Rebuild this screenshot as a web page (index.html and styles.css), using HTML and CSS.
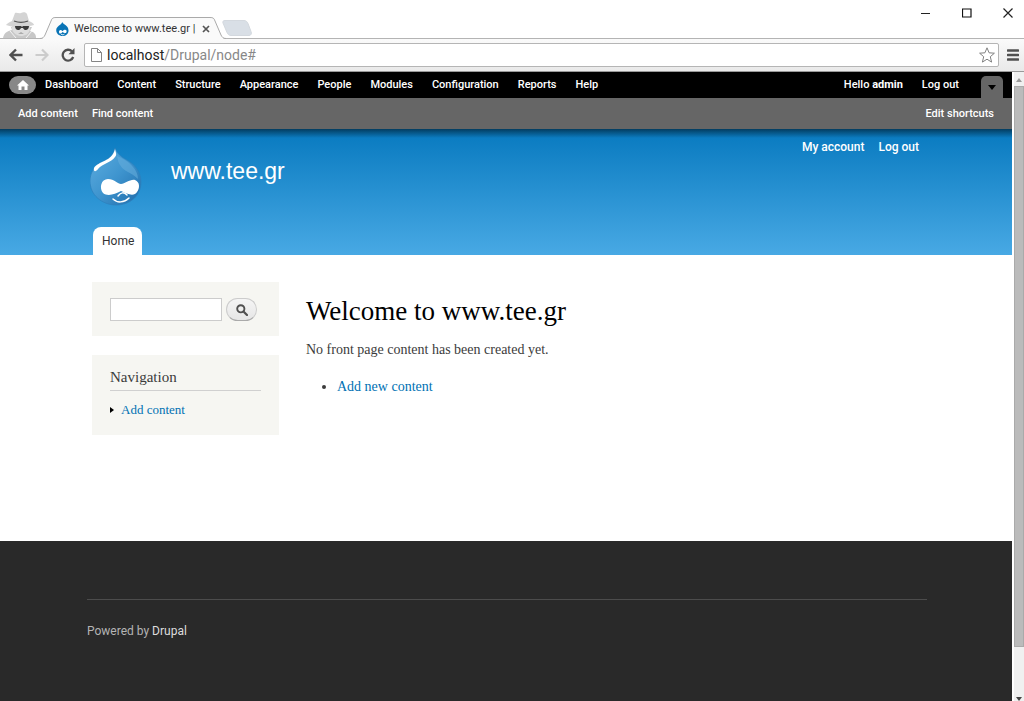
FILE: index.html
```html
<!DOCTYPE html>
<html lang="en">
<head>
<meta charset="utf-8">
<title>Welcome to www.tee.gr</title>
<link rel="stylesheet" href="styles.css">
</head>
<body>
<div class="window">
  <div class="tabstrip">
    <svg class="incognito" width="34" height="26" viewBox="0 0 34 26">
      <path d="M0 26c1-5 4-7 9-8l-1-3h21l-2 4c4 1 6 3 6 7z" fill="#c8c8c8"/>
      <path d="M9 12h18v5c-1 5-5 7-9 7s-8-3-9-7z" fill="#dedede"/>
      <path d="M12 1c2-1 4 1 6 0s5-1 6 1l2 7c3 1 5 3 5 4-6 2-21 3-28 0 1-1 3-3 6-4z" fill="#d4d4d4"/>
      <path d="M11 9c5 2 9 2 14 0" fill="none" stroke="#555" stroke-width="1.200"/>
      <path d="M12 14h6l1 1 1-1h6c0 5-5 5-6 2h-2c-1 3-6 3-6-2z" fill="#3b3b3b"/>
      <path d="M15 22h6l-3-2z" fill="#aaa"/>
      <path d="M7 19l6 7M29 19l-6 7" stroke="#f4f4f4"/>
    </svg>
    <div class="tab">
      <svg class="tab-edge" width="16" height="22" viewBox="0 0 16 22"><path d="M0 22C3 22 4 20 5 18L11 4C12 1 13 .5 16 .5V22z" fill="#fafafa"/><path d="M0 21.500C3 21.500 4 20 5 18L11 4C12 1 13 .5 16 .5" fill="none" stroke="#aaa"/></svg>
      <div class="tab-body">
        <svg width="13" height="14" viewBox="0 0 52 58"><path d="M25 0c4 11 26 14 26 35 0 14-11 23-25 23S0 48 0 34C0 17 20 14 25 0z" fill="#0873b5"/><path d="M13 47c-5-10 4-19 13-9 9-10 18-7 17 1-1 10-9 8-17 2-5 6-9 8-13 6z" fill="#fff"/><path d="M20 50c5 4 9 4 14 0" fill="none" stroke="#fff" stroke-width="4"/></svg>
        <span class="tab-title">Welcome to www.tee.gr |</span>
        <button class="plain" aria-label="Close tab"><svg width="8" height="8" viewBox="0 0 8 8"><path d="M1 1l6 6M7 1L1 7" stroke="#555" stroke-width="1.700"/></svg></button>
      </div>
      <svg class="tab-edge" width="16" height="22" viewBox="0 0 16 22"><path d="M16 22C13 22 12 20 11 18L5 4C4 1 3 .5 0 .5V22z" fill="#fafafa"/><path d="M16 21.500C13 21.500 12 20 11 18L5 4C4 1 3 .5 0 .5" fill="none" stroke="#aaa"/></svg>
    </div>
    <button class="plain new-tab" aria-label="New tab"><svg width="30" height="16" viewBox="0 0 30 16"><path d="M3 .5h19c2 0 3 1 4 3l3 8c1 2 0 4-2 4H9c-2 0-3-1-4-3L1 3C.5 1.500 1 .5 3 .5z" fill="#d9dfe6" stroke="#d3d8de"/></svg></button>
    <div class="window-buttons">
      <button class="plain" aria-label="Minimize"><svg width="10" height="10" viewBox="0 0 10 10"><path d="M0 5.500h9" stroke="#222"/></svg></button>
      <button class="plain" aria-label="Maximize"><svg width="10" height="10" viewBox="0 0 10 10"><path d="M.5 1h8.500v8H.5z" fill="none" stroke="#111" stroke-width="1.200"/></svg></button>
      <button class="plain" aria-label="Close"><svg width="10" height="10" viewBox="0 0 10 10"><path d="M.5 .5l9 9M9.500 .5l-9 9" stroke="#222" stroke-width="1.200"/></svg></button>
    </div>
  </div>
  <div class="addressbar">
    <button class="plain" aria-label="Back"><svg width="14" height="14" viewBox="0 0 14 14"><path d="M13.500 7H2M7 1.500L1.500 7 7 12.500" fill="none" stroke="#505050" stroke-width="2.400"/></svg></button>
    <button class="plain" aria-label="Forward"><svg width="14" height="14" viewBox="0 0 14 14"><path d="M.5 7H12M7 1.500L12.500 7 7 12.500" fill="none" stroke="#ccc" stroke-width="2.200"/></svg></button>
    <button class="plain" aria-label="Reload"><svg width="14" height="14" viewBox="0 0 14 14"><path d="M11 3.400A5.400 5.400 0 1 0 12.200 9" fill="none" stroke="#505050" stroke-width="2.300"/><path d="M13.500 0v6.300H7.500z" fill="#505050"/></svg></button>
    <div class="omnibox">
      <svg width="11" height="14" viewBox="0 0 11 14"><path d="M.5 .5h6l4 4v9H.5zM6.500 .5v4h4" fill="#fff" stroke="#858585"/></svg>
      <div class="url">localhost<span>/Drupal/node#</span></div>
      <button class="plain" aria-label="Bookmark"><svg width="16" height="16" viewBox="0 0 16 16"><path d="M8 .8l2.100 5 5.300.4-4.100 3.500 1.300 5.400L8 12.200l-4.600 2.900 1.300-5.400L.6 6.200l5.300-.4z" fill="#fff" stroke="#808080" stroke-linejoin="round"/></svg></button>
    </div>
    <button class="plain" aria-label="Menu"><svg width="12" height="12" viewBox="0 0 12 12"><path d="M1 1.500h10M1 6h10M1 10.500h10" stroke="#505050" stroke-width="2.600" stroke-linecap="round"/></svg></button>
  </div>

  <div class="viewport">
    <div class="page">
      <nav class="admin-bar" aria-label="Administration">
        <a class="home" href="#" aria-label="Home"><svg width="12" height="10" viewBox="0 0 12 10"><path d="M6 0l6 5.500h-1.500V10h-3V6.500h-3V10h-3V5.500H0z" fill="#fff"/></svg></a>
        <a href="#">Dashboard</a><a href="#">Content</a><a href="#">Structure</a><a href="#">Appearance</a><a href="#">People</a><a href="#">Modules</a><a href="#">Configuration</a><a href="#">Reports</a><a href="#">Help</a>
        <a class="push" href="#">Hello <b>admin</b></a><a href="#">Log out</a>
        <button class="drawer-toggle" aria-label="Toggle shortcuts"><svg width="8" height="5" viewBox="0 0 8 5"><path d="M0 0h8L4 5z" fill="#000"/></svg></button>
      </nav>
      <nav class="shortcuts" aria-label="Shortcuts">
        <a href="#">Add content</a><a href="#">Find content</a><a class="push" href="#">Edit shortcuts</a>
      </nav>
      <header class="site-header">
        <div class="container header-inner">
          <nav class="user-links" aria-label="Account"><a href="#">My account</a><a href="#">Log out</a></nav>
          <div class="brand">
            <svg width="52" height="58" viewBox="0 0 52 58">
              <defs><linearGradient id="drop" x1="0" y1="0" x2="1" y2="1"><stop offset="0" stop-color="#5faee0"/><stop offset=".5" stop-color="#3f95cf"/><stop offset="1" stop-color="#1f6cab"/></linearGradient></defs>
              <path d="M25 0c3 8 9 10 15 14 7 5 11 12 11 20 0 14-11 23-25 23S0 47 0 33c0-8 4-14 10-18C18 11 23 9 25 0z" fill="url(#drop)" stroke="#2d7fbb" stroke-width=".7"/>
              <path d="M27 8c12 5 21 13 21 23-8-8-14-7-18-14-2-3-2-5-3-9z" fill="#68afdd" opacity=".55"/>
              <path d="M25 1c1 4 2 6 0 8-4 6-12 6-17 12-2 3-5 3-4-1C8 13 22 14 25 1z" fill="#fff"/>
              <path d="M13 45c-4-5-2-14 5-14 6 0 10 5 13 5 4 0 9-5 14-4 5 2 5 8 2 12-3 5-10 2-16-1-6 3-13 6-18 2z" fill="#fff"/>
              <path d="M28 48c3-4 6-4 9-1M23 51c4 4 11 4 16-1" fill="none" stroke="#fff" stroke-width="1.500" stroke-linecap="round"/>
            </svg>
            <a class="site-name" href="#">www.tee.gr</a>
          </div>
          <nav class="main-menu" aria-label="Main menu"><a href="#">Home</a></nav>
        </div>
      </header>
      <div class="container columns">
        <aside class="sidebar">
          <form class="block search" role="search">
            <input type="text" aria-label="Search">
            <button type="button" aria-label="Search"><svg width="12" height="12" viewBox="0 0 12 12"><circle cx="4.800" cy="4.800" r="3.600" fill="none" stroke="#505050" stroke-width="1.900"/><path d="M7.500 7.500l3.500 3.500" stroke="#505050" stroke-width="2.200" stroke-linecap="round"/></svg></button>
          </form>
          <nav class="block" aria-labelledby="nav-title">
            <h2 id="nav-title">Navigation</h2>
            <ul class="menu"><li><svg width="4" height="6" viewBox="0 0 4 6"><path d="M0 0l4 3-4 3z"/></svg><a href="#">Add content</a></li></ul>
          </nav>
        </aside>
        <main class="content">
          <h1>Welcome to www.tee.gr</h1>
          <p>No front page content has been created yet.</p>
          <ul><li><a href="#">Add new content</a></li></ul>
        </main>
      </div>
      <footer class="site-footer"><div class="container"><p>Powered by <a href="#">Drupal</a></p></div></footer>
    </div>
    <div class="scrollbar">
      <svg width="6" height="4" viewBox="0 0 6 4"><path d="M0 4l3-4 3 4z" fill="#999"/></svg>
      <div class="thumb"></div>
      <svg width="6" height="4" viewBox="0 0 6 4"><path d="M0 0h6L3 4z" fill="#444"/></svg>
    </div>
  </div>
</div>
</body>
</html>
```
FILE: styles.css
```css
* { box-sizing: border-box; }
body { margin: 0; background: #fff; }
a { text-decoration: none; }
svg { display: block; flex: none; }
h1, h2, p, ul { margin: 0; font-weight: normal; }

.window { display: flex; flex-direction: column; height: 100vh; overflow: hidden; }
.plain { display: flex; padding: 0; border: 0; background: none; }

.tabstrip { display: flex; align-items: flex-end; height: 39px; border-bottom: 1px solid #b4b4b4; }
.incognito { margin: 0 3px; }
.tab { display: flex; margin-bottom: -1px; }
.tab-body { display: flex; align-items: center; gap: 5px; height: 22px; border-top: 1px solid #aaa; background: #fafafa; }
.tab-title { width: 123px; color: #333; font: 11px/16px Roboto, sans-serif; white-space: nowrap; }
.new-tab { margin: 0 0 2px -4px; }
.window-buttons { display: flex; gap: 31px; align-self: flex-start; margin: 8px 11px 0 auto; }

.addressbar { display: flex; flex: none; align-items: center; gap: 12px; height: 33px; padding: 0 5px 0 9px; border-bottom: 1px solid #999; background: linear-gradient(#fafafa, #e9e9e9); }
.omnibox { display: flex; flex: 1; align-items: center; gap: 5px; height: 24px; margin: 0 -4px 0 -3px; padding: 0 3px 0 6px; border: 1px solid #b5b5b5; border-radius: 2px; background: #fff; }
.url { flex: 1; color: #222; font: 14px/20px Roboto, sans-serif; }
.url span { color: #888; }

.viewport { display: flex; flex: 1; min-height: 0; }
.page { display: flex; flex: 1; flex-direction: column; min-width: 0; }
.scrollbar { display: flex; flex-direction: column; align-items: center; gap: 4px; width: 12px; padding-top: 6px; border-left: 2px solid #fff; background: #f0f0f0; }
.thumb { width: 100%; height: 90%; margin-bottom: auto; border: 1px solid #aaa; background: #bbb; }

.admin-bar, .shortcuts { display: flex; flex: none; align-items: center; color: #fff; font: 500 11px/16px Roboto, sans-serif; }
.admin-bar a, .shortcuts a { color: #fff; }
.admin-bar { gap: 19px; height: 26px; padding: 0 9px; background: #000; }
.admin-bar .home { display: flex; align-items: center; justify-content: center; width: 27px; height: 18px; margin-right: -10px; border-radius: 9px; background: #888; }
.admin-bar .push, .shortcuts .push { margin-left: auto; }
.drawer-toggle { display: flex; align-items: center; justify-content: center; align-self: flex-end; width: 22px; height: 22px; margin-left: 3px; padding: 0; border: 0; border-radius: 5px 5px 0 0; background: #666; }
.shortcuts { gap: 14px; height: 31px; padding: 0 18px; background: #666; }

.container { width: 100%; max-width: 842px; margin: 0 auto; padding-left: 2px; }
.site-header { flex: none; background: linear-gradient(rgba(0, 0, 0, .5), transparent 9px), linear-gradient(#0779bf, #48a9e4); }
.header-inner { display: grid; grid-template-columns: 1fr auto; padding: 10px 8px 0 5px; }
.user-links { display: flex; grid-column: 2; grid-row: 1; gap: 14px; font: 500 12px/16px Roboto, sans-serif; }
.user-links a { color: #fff; }
.brand { display: flex; grid-column: 1; grid-row: 1; gap: 29px; height: 88px; padding-top: 9px; }
.site-name { margin-top: 9px; color: #fff; font: 23px/28px "Liberation Sans", Arial, sans-serif; }
.main-menu { display: flex; grid-column: 1; padding-left: 3px; }
.main-menu a { padding: 4px 8px 4px 9px; border-radius: 8px 8px 0 0; background: #fff; color: #333; font: 12px/20px Roboto, sans-serif; }

.columns { display: flex; flex: 1; align-items: flex-start; gap: 27px; padding: 27px 5px 0 7px; color: #3b3b3b; font: 14px/20px "Liberation Serif", Georgia, serif; }
.columns a { color: #0071b3; }
.sidebar { display: flex; flex-direction: column; gap: 19px; width: 187px; }
.block { padding: 12px 18px 15px; background: #f6f6f2; }
.search { display: flex; gap: 4px; padding: 16px 18px 15px; }
.search input { width: 112px; height: 23px; border: 1px solid #ccc; background: #fff; }
.search button { display: flex; align-items: center; justify-content: center; width: 31px; height: 23px; padding: 0; border: 1px solid #ccc; border-bottom-color: #aaa; border-radius: 12px; background: linear-gradient(#f5f5f5, #e6e6e6); }
.block h2 { padding-bottom: 3px; border-bottom: 1px solid #d0d0d0; font-size: 15px; line-height: 20px; }
.menu { padding: 9px 0 0; list-style: none; }
.menu li { display: flex; align-items: center; gap: 7px; font-size: 13px; }
.content { flex: 1; font-size: 14px; }
.content h1 { margin-top: 12px; color: #000; font-size: 27px; line-height: 34px; }
.content p { margin-top: 12px; }
.content ul { margin-top: 17px; padding-left: 31px; }

.site-footer { flex: none; height: 160px; padding-top: 58px; background: #292929; }
.site-footer p { padding-top: 23px; border-top: 1px solid #4c4c4c; color: #b4b4b4; font: 12px/16px Roboto, sans-serif; }
.site-footer a { color: #ddd; }
```
